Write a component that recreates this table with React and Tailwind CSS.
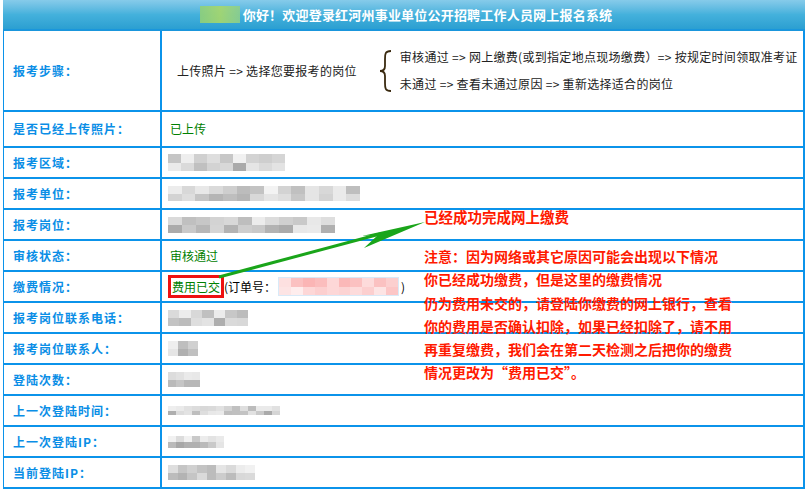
import React from "react";

const green = "text-[#008000]";

// mosaic placeholder for blurred values
const Blur = ({ w, h, cols, tone = "gray", seed = 1 }) => {
  const cells = [];
  const rowsN = 2;
  let s = seed * 9301 + 49297;
  for (let r = 0; r < rowsN; r++) {
    for (let c = 0; c < cols; c++) {
      s = (s * 9301 + 49297) % 233280;
      const v = s / 233280;
      let color;
      if (tone === "pink") {
        const l = r === 0 ? 0.82 + v * 0.12 : 0.86 + v * 0.1;
        color = `hsl(0, 90%, ${Math.round(l * 100)}%)`;
      } else {
        const l = r === 0 ? 0.7 + v * 0.25 : 0.62 + v * 0.3;
        color = `hsl(0, 0%, ${Math.round(l * 100)}%)`;
      }
      cells.push(<div key={r + "-" + c} style={{ background: color }} />);
    }
  }
  return (
    <div
      className="grid opacity-90"
      style={{ width: w, height: h, gridTemplateColumns: `repeat(${cols}, 1fr)` }}
    >
      {cells}
    </div>
  );
};

const Label = ({ children }) => (
  <div className="w-[158px] shrink-0 border-r-2 border-[#0b93ea] flex items-center pl-[9px] text-[12px] font-bold text-[#0a8ee6] tracking-[1px]">
    {children}
  </div>
);

const Row = ({ label, h, children }) => (
  <div className="flex border-b-2 border-[#0b93ea]" style={{ height: h }}>
    <Label>{label}</Label>
    <div className="flex-1 flex items-center pl-[6px] text-[12px]">{children}</div>
  </div>
);

const App = () => {
  const rows = [
    { label: "是否已经上传照片：", h: 36, v: <span className={"pl-[2px] " + green}>已上传</span> },
    { label: "报考区域：", h: 31, v: <Blur w={117} h={17} cols={9} seed={3} /> },
    { label: "报考单位：", h: 31, v: <Blur w={192} h={15} cols={14} seed={5} /> },
    { label: "报考岗位：", h: 31, v: <Blur w={167} h={16} cols={12} seed={7} /> },
    { label: "审核状态：", h: 31, v: <span className={"pl-[2px] " + green}>审核通过</span> },
    {
      label: "缴费情况：",
      h: 31,
      v: (
        <div className="flex items-center">
          <span className={"border-[3px] border-[#ee1111] px-[1px] leading-[15px] py-[1px] " + green}>费用已交</span>
          <span className="text-black">(订单号：</span>
          <div className="ml-[3px] mr-[3px] outline outline-[#d8eaf8]">
            <Blur w={119} h={17} cols={10} tone="pink" seed={11} />
          </div>
          <span className="text-black">)</span>
        </div>
      ),
    },
    { label: "报考岗位联系电话：", h: 31, v: <Blur w={80} h={16} cols={7} seed={13} /> },
    { label: "报考岗位联系人：", h: 31, v: <Blur w={30} h={15} cols={3} seed={17} /> },
    { label: "登陆次数：", h: 31, v: <Blur w={32} h={15} cols={4} seed={19} /> },
    { label: "上一次登陆时间：", h: 31, v: <Blur w={112} h={9} cols={14} seed={23} /> },
    { label: "上一次登陆IP：", h: 31, v: <Blur w={56} h={12} cols={7} seed={29} /> },
    { label: "当前登陆IP：", h: 31, v: <Blur w={87} h={15} cols={9} seed={31} /> },
  ];

  return (
    <div className="relative w-[807px] h-[491px] bg-white font-['SimSun','Noto_Sans_CJK_SC',sans-serif] text-[#222] overflow-hidden">
      <div className="ml-[3px] w-[802px]">
        {/* header */}
        <div className="h-[31px] border-b-2 border-[#1a96dc] bg-linear-to-b from-[#86cbea] via-[#44b1dc] to-[#2b9fd1] flex items-center justify-center pl-[4px]">
          <div className="mr-[3px] opacity-90">
            <div className="w-[40px] h-[17px] bg-linear-to-r from-[#8fd07a] via-[#a8d86a] to-[#8ccf8c] blur-[0.5px]" />
          </div>
          <span className="text-white text-[13px] font-bold tracking-[0.2px]">你好！欢迎登录红河州事业单位公开招聘工作人员网上报名系统</span>
        </div>

        <div className="border-l border-r-2 border-[#0b93ea]">
          {/* steps */}
          <div className="flex border-b-2 border-[#0b93ea] h-[81px]">
            <Label>报考步骤：</Label>
            <div className="flex-1 flex items-center pl-[15px] text-[12px] text-[#222] tracking-[0.3px]">
              <span>上传照片 =&gt; 选择您要报考的岗位</span>
              <svg width="14" height="42" viewBox="0 0 14 42" className="ml-[22px] mr-[7px]">
                <path
                  d="M12 1 C6 1 6 4 6 9 L6 16 C6 19 4 21 1 21 C4 21 6 23 6 26 L6 33 C6 38 6 41 12 41"
                  fill="none"
                  stroke="#3a2a10"
                  strokeWidth="1.8"
                />
              </svg>
              <div className="flex flex-col gap-[9px]">
                <span>审核通过 =&gt; 网上缴费(或到指定地点现场缴费）=&gt; 按规定时间领取准考证</span>
                <span>未通过 =&gt; 查看未通过原因 =&gt; 重新选择适合的岗位</span>
              </div>
            </div>
          </div>

          {rows.map((r) => (
            <Row key={r.label} label={r.label} h={r.h}>
              {r.v}
            </Row>
          ))}
        </div>
      </div>

      {/* annotation arrow */}
      <svg className="absolute left-0 top-0 pointer-events-none" width="807" height="491">
        <line x1="219" y1="277" x2="380" y2="234" stroke="#1aa51a" strokeWidth="3" />
        <polygon points="425,222 362,236 378,235 364,248" fill="#1aa51a" />
      </svg>

      {/* annotation text */}
      <div className="absolute left-[424px] top-[207px] text-[14.5px] font-bold text-[#ff1a00] leading-[20px]">
        已经成功完成网上缴费
      </div>
      <div className="absolute left-[424px] top-[245px] text-[14px] font-bold text-[#ff1a00] leading-[23.3px]">
        <div>注意：因为网络或其它原因可能会出现以下情况</div>
        <div>你已经成功缴费，但是这里的缴费情况</div>
        <div>仍为费用未交的，请登陆你缴费的网上银行，查看</div>
        <div>你的费用是否确认扣除，如果已经扣除了，请不用</div>
        <div>再重复缴费，我们会在第二天检测之后把你的缴费</div>
        <div>情况更改为“费用已交”。</div>
      </div>
    </div>
  );
};

export default App;
